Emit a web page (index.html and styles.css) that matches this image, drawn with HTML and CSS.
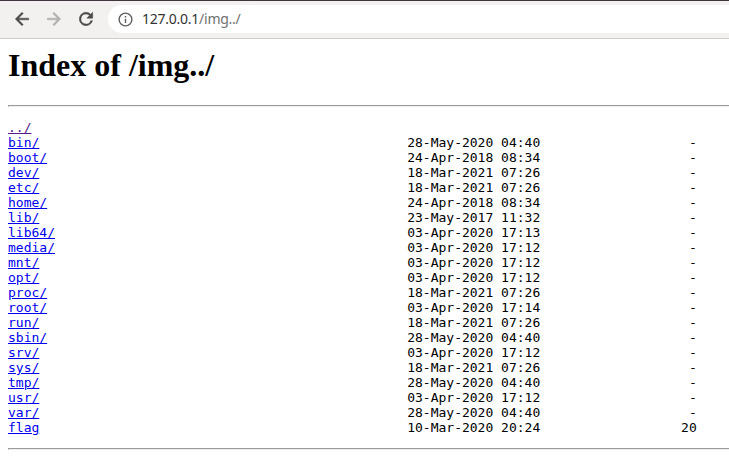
FILE: index.html
```
<!DOCTYPE html>
<html lang="en">
<head>
<meta charset="utf-8">
<title>Index of /img../</title>
<link rel="stylesheet" href="styles.css">
</head>
<body>
<header class="toolbar">
<svg class="icon back" viewBox="0 0 24 24"><path d="M20 11H7.83l5.59-5.59L12 4l-8 8 8 8 1.41-1.41L7.83 13H20v-2z"/></svg>
<svg class="icon forward" viewBox="0 0 24 24"><path d="M12 4l-1.41 1.41L16.17 11H4v2h12.17l-5.58 5.59L12 20l8-8z"/></svg>
<svg class="icon reload" viewBox="0 0 24 24"><path d="M17.65 6.35A7.96 7.96 0 0 0 12 4a8 8 0 1 0 7.73 10h-2.08A6 6 0 1 1 12 6c1.66 0 3.14.69 4.22 1.78L13 11h7V4l-2.35 2.35z"/></svg>
<div class="address">
<svg class="info" viewBox="0 0 24 24"><path d="M11 17h2v-6h-2v6zm1-15a10 10 0 1 0 0 20 10 10 0 0 0 0-20zm0 18a8 8 0 1 1 0-16 8 8 0 0 1 0 16zM11 9h2V7h-2v2z"/></svg>
<span class="url">127.0.0.1<span class="path">/img../</span></span>
</div>
</header>
<main class="page">
<h1>Index of /img../</h1>
<hr>
<pre class="listing"><a class="seen" href="#">../</a>
<a href="#">bin/</a>                                               28-May-2020 04:40                   -
<a href="#">boot/</a>                                              24-Apr-2018 08:34                   -
<a href="#">dev/</a>                                               18-Mar-2021 07:26                   -
<a href="#">etc/</a>                                               18-Mar-2021 07:26                   -
<a href="#">home/</a>                                              24-Apr-2018 08:34                   -
<a href="#">lib/</a>                                               23-May-2017 11:32                   -
<a href="#">lib64/</a>                                             03-Apr-2020 17:13                   -
<a href="#">media/</a>                                             03-Apr-2020 17:12                   -
<a href="#">mnt/</a>                                               03-Apr-2020 17:12                   -
<a href="#">opt/</a>                                               03-Apr-2020 17:12                   -
<a href="#">proc/</a>                                              18-Mar-2021 07:26                   -
<a href="#">root/</a>                                              03-Apr-2020 17:14                   -
<a href="#">run/</a>                                               18-Mar-2021 07:26                   -
<a href="#">sbin/</a>                                              28-May-2020 04:40                   -
<a href="#">srv/</a>                                               03-Apr-2020 17:12                   -
<a href="#">sys/</a>                                               18-Mar-2021 07:26                   -
<a href="#">tmp/</a>                                               28-May-2020 04:40                   -
<a href="#">usr/</a>                                               03-Apr-2020 17:12                   -
<a href="#">var/</a>                                               28-May-2020 04:40                   -
<a href="#">flag</a>                                               10-Mar-2020 20:24                  20
</pre>
<hr>
</main>
</body>
</html>
```

FILE: styles.css
```
body {
  margin: 0;
  height: 456px;
  overflow: hidden;
  background: #fff;
  color: #000;
}

.toolbar {
  box-sizing: border-box;
  height: 39px;
  display: flex;
  align-items: center;
  padding: 0 0 1px 12px;
  background: linear-gradient(#f5eff2, #f2f1ef 6px);
  border-top: 1px solid #3c383b;
  border-bottom: 1px solid #cdcdcd;
}

.icon {
  flex: none;
  width: 20px;
  height: 20px;
  margin-right: 12px;
  fill: #4a4a4a;
  stroke: #4a4a4a;
  stroke-width: 0.6;
}

.forward {
  fill: #b0afae;
  stroke: #b0afae;
}

.address {
  flex: 1;
  height: 28px;
  display: flex;
  align-items: center;
  padding-left: 9px;
  border-radius: 14px 0 0 14px;
  background: #fff;
}

.info {
  width: 17px;
  height: 17px;
  margin-right: 8px;
  fill: #5f6063;
}

.url {
  font: 14px/20px "Noto Sans", sans-serif;
  letter-spacing: -0.25px;
  color: #333;
}

.path {
  color: #707070;
}

.page {
  padding: 0 0 0 8px;
}

h1 {
  margin: 8px 0 21px;
  font: bold 32px/37px "Liberation Serif", serif;
}

hr {
  margin: 0 -2px 0 0;
}

.listing {
  margin: 13px 0;
  font: 13px/15px "DejaVu Sans Mono", monospace;
}

a {
  color: #0000ee;
}

.seen {
  color: #551a8b;
}
```
